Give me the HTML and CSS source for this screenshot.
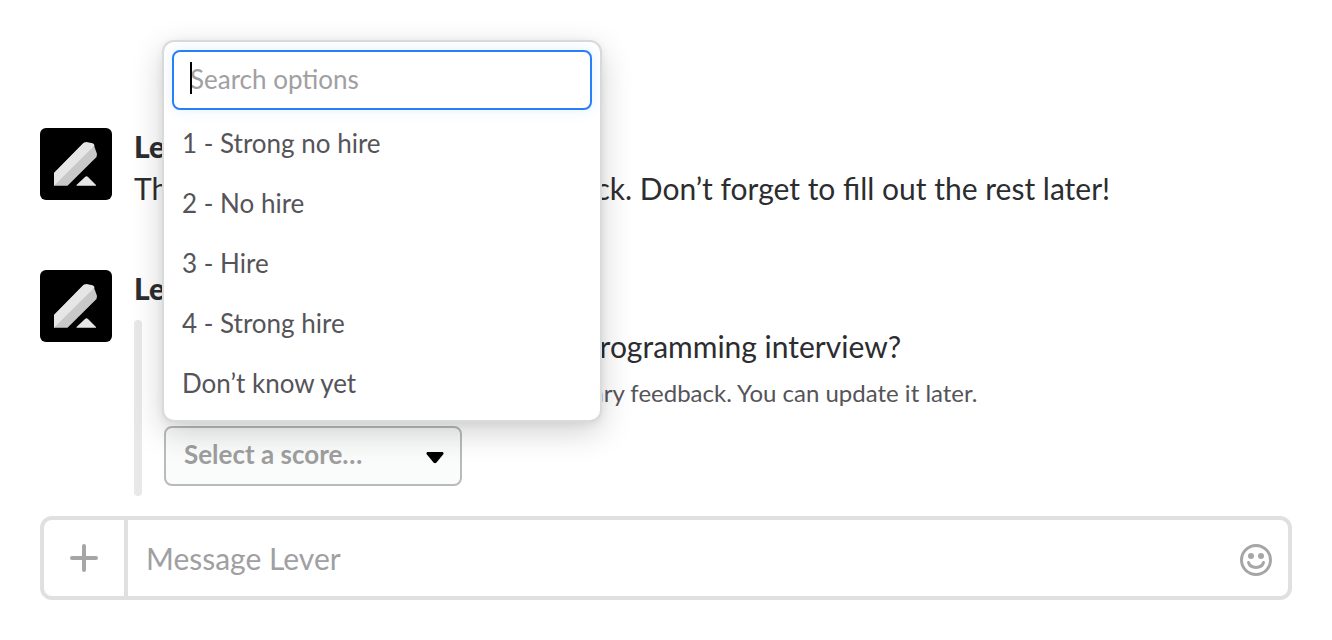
FILE: index.html
```html
<!DOCTYPE html>
<html lang="en">
<head>
    <meta charset="UTF-8">
    <meta name="viewport" content="width=device-width, initial-scale=1.0">
    <title>Lever</title>
    <link rel="stylesheet" href="styles.css">
</head>
<body>

<svg class="sprite" width="0" height="0" aria-hidden="true">
    <symbol id="lever-logo" viewBox="0 0 72 72">
        <path fill="#c8c8c8" d="M14 57.700V45L44 14.500L54 17.500L57 26L56.500 29L27.500 57.700Z"/>
        <path fill="#e6e6e6" d="M14 57.700V45L43 15.500Q44.500 14 46.500 14L52.500 15.300Q54 15.800 54.500 17.500Z"/>
        <path fill="#e6e6e6" d="M36.500 57.700V57L45 49Q46.500 47.500 48 49L56 57V57.700Z"/>
    </symbol>
</svg>

<main class="chat">
    <div class="messages">
        <article class="message">
            <svg class="avatar" role="img" aria-label="Lever"><use href="#lever-logo"/></svg>
            <div class="message-body">
                <h2 class="author">Lever</h2>
                <p class="text">Thanks for submitting some feedback. Don’t forget to fill out the rest later!</p>
            </div>
        </article>

        <article class="message">
            <svg class="avatar" role="img" aria-label="Lever"><use href="#lever-logo"/></svg>
            <div class="message-body">
                <h2 class="author">Lever</h2>
                <div class="attachment">
                    <p class="question">How did Sarah do in this recent programming interview?</p>
                    <p class="hint">This will be documented as your preliminary feedback. You can update it later.</p>
                    <div class="score">
                        <select class="score-select" aria-label="Score">
                            <option>Select a score…</option>
                        </select>
                        <svg class="score-arrow" viewBox="0 0 18 12" aria-hidden="true">
                            <path d="M1.500 0H16.500Q18 .3 17.500 2L10.500 10.500Q9 12 7.500 10.500L.5 2Q0 .3 1.500 0Z"/>
                        </svg>
                        <div class="menu">
                            <div class="search">
                                <input class="search-input" type="text" placeholder="Search options" aria-label="Search options">
                                <span class="caret"></span>
                            </div>
                            <ul class="options">
                                <li><button class="option" type="button">1 - Strong no hire</button></li>
                                <li><button class="option" type="button">2 - No hire</button></li>
                                <li><button class="option" type="button">3 - Hire</button></li>
                                <li><button class="option" type="button">4 - Strong hire</button></li>
                                <li><button class="option" type="button">Don’t know yet</button></li>
                            </ul>
                        </div>
                    </div>
                </div>
            </div>
        </article>
    </div>

    <form class="composer">
        <button class="add" type="button" aria-label="Add">
            <svg width="28" height="28" viewBox="0 0 28 28" fill="none" stroke="#a6a6a6" stroke-width="4" stroke-linecap="round">
                <path d="M14 2V26M2 14H26"/>
            </svg>
        </button>
        <input class="composer-input" type="text" placeholder="Message Lever" aria-label="Message Lever">
        <button class="emoji" type="button" aria-label="Emoji">
            <svg width="32" height="32" viewBox="0 0 32 32" fill="none" stroke="#a6a6a6" stroke-width="3" stroke-linecap="round">
                <circle cx="16" cy="16" r="14.500"/>
                <path d="M8.500 18.500C10.500 25 21.500 25 23.500 18.500"/>
                <circle cx="11" cy="12" r="3" fill="#a6a6a6" stroke="none"/>
                <circle cx="21" cy="12" r="3" fill="#a6a6a6" stroke="none"/>
            </svg>
        </button>
    </form>
</main>

</body>
</html>
```
FILE: styles.css
```css
* {
    box-sizing: border-box;
}
body {
    margin: 0;
    background: #ffffff;
    color: #2c2d30;
    font-family: Lato, sans-serif;
    font-size: 30px;
}
h2, p, ul {
    margin: 0;
    padding: 0;
}
input, select, button {
    font-family: inherit;
}
.sprite {
    position: absolute;
}
.chat {
    padding: 128px 40px 40px;
}
.message {
    display: flex;
    gap: 22px;
    margin-bottom: 20px;
}
.message:first-child {
    min-height: 122px;
}
.avatar {
    flex: none;
    width: 72px;
    height: 72px;
    border-radius: 6px;
    background: #000000;
}
.message-body {
    flex: 1;
}
.author {
    font-size: 30px;
    font-weight: 900;
    line-height: 36px;
}
.text {
    line-height: 48px;
}
.attachment {
    position: relative;
    margin-top: 14px;
    padding: 2px 0 10px 30px;
}
.attachment::before {
    content: "";
    position: absolute;
    top: 0;
    bottom: 0;
    left: 0;
    width: 8px;
    border-radius: 4px;
    background: #e8e8e8;
}
.question {
    line-height: 48px;
}
.hint {
    color: #555459;
    font-size: 24px;
    line-height: 46px;
}
.score {
    position: relative;
    width: 298px;
    margin-top: 10px;
}
.score-select {
    display: block;
    width: 100%;
    height: 60px;
    padding: 0 48px 4px 18px;
    border: 2px solid #b9bbbb;
    border-radius: 8px;
    appearance: none;
    background: #fafcfb;
    color: #9e9e9e;
    font-size: 26px;
    font-weight: 700;
}
.score-arrow {
    position: absolute;
    top: 26px;
    right: 18px;
    width: 18px;
    height: 12px;
}
.menu {
    position: absolute;
    bottom: 64px;
    left: -2px;
    width: 440px;
    padding: 8px 8px 6px;
    border: 2px solid #d9dada;
    border-radius: 12px;
    background: #ffffff;
    box-shadow: 0 10px 32px rgba(0, 0, 0, 0.18), 0 2px 8px rgba(0, 0, 0, 0.06);
}
.search {
    position: relative;
    margin-bottom: 4px;
}
.search-input {
    display: block;
    width: 100%;
    height: 60px;
    padding: 0 16px 2px;
    border: 2px solid #2780f8;
    border-radius: 8px;
    outline: none;
    box-shadow: 0 0 14px rgba(39, 128, 248, 0.12);
    color: #555459;
    font-size: 26px;
}
.search-input::placeholder, .composer-input::placeholder {
    color: #a0a0a2;
    opacity: 1;
}
.caret {
    position: absolute;
    top: 12px;
    left: 18px;
    width: 2px;
    height: 32px;
    background: #000000;
}
.options {
    list-style: none;
}
.option {
    display: block;
    width: 100%;
    height: 60px;
    padding: 0 10px 2px;
    border: 0;
    background: none;
    color: #555459;
    font-size: 26px;
    text-align: left;
}
.composer {
    display: flex;
    height: 84px;
    border: 4px solid #e0e0e0;
    border-radius: 12px;
}
.composer button {
    display: flex;
    align-items: center;
    justify-content: center;
    padding: 0;
    border: 0;
    background: none;
}
.composer .add {
    width: 84px;
    border-right: 4px solid #e0e0e0;
}
.composer-input {
    flex: 1;
    min-width: 0;
    padding: 0 18px;
    border: 0;
    outline: none;
    background: none;
    font-size: 30px;
}
.composer .emoji {
    width: 64px;
    padding-top: 4px;
}
```
